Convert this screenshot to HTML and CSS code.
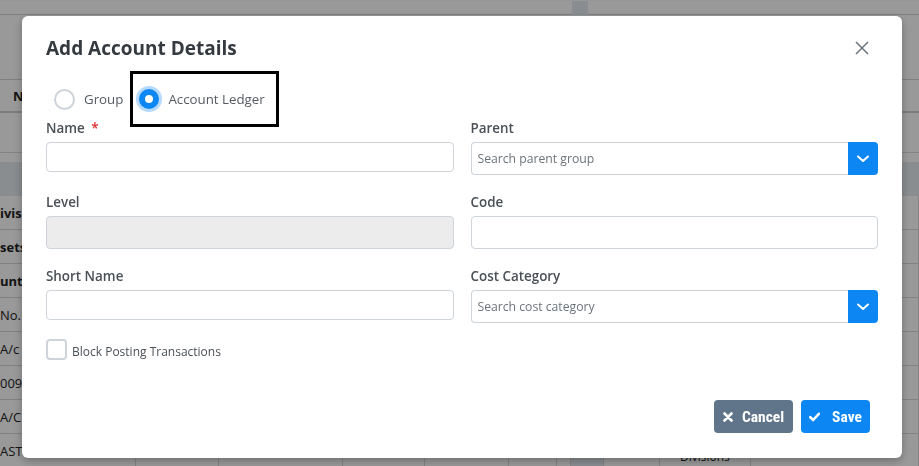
FILE: index.html
```html
<!DOCTYPE html>
<html lang="en">
<head>
<meta charset="utf-8">
<title>Add Account Details</title>
<link rel="stylesheet" href="styles.css">
</head>
<body>
<div class="bg-page">
  <div class="bg-top"><span class="bg-top-tab"></span></div>
  <div class="bg-head"><span class="bg-head-cell">N</span></div>
  <div class="bg-filter"></div>
  <div class="bg-band"></div>
  <div class="bg-row bold"><span>ivis</span><span></span><span></span><span></span><span></span><span></span><span></span><span class="bg-tint"></span><span></span><span></span><span></span></div>
  <div class="bg-row bold"><span>sets</span><span></span><span></span><span></span><span></span><span></span><span></span><span class="bg-tint"></span><span></span><span></span><span></span></div>
  <div class="bg-row bold"><span>unts</span><span></span><span></span><span></span><span></span><span></span><span></span><span class="bg-tint"></span><span></span><span></span><span></span></div>
  <div class="bg-row"><span>No.1</span><span></span><span></span><span></span><span></span><span></span><span></span><span class="bg-tint"></span><span></span><span></span><span></span></div>
  <div class="bg-row"><span>A/c N</span><span></span><span></span><span></span><span></span><span></span><span></span><span class="bg-tint"></span><span></span><span></span><span></span></div>
  <div class="bg-row"><span>0092</span><span></span><span></span><span></span><span></span><span></span><span></span><span class="bg-tint"></span><span></span><span></span><span></span></div>
  <div class="bg-row"><span>A/C</span><span></span><span></span><span></span><span></span><span></span><span></span><span class="bg-tint"></span><span></span><span></span><span></span></div>
  <div class="bg-row"><span>AST</span><span></span><span></span><span></span><span></span><span></span><span></span><span class="bg-tint"></span><span></span><span class="bg-low">Divisions</span><span></span></div>
</div>

<div class="overlay">
  <div class="modal">
    <div class="modal-header">
      <h2 class="modal-title">Add Account Details</h2>
      <button class="close-btn" type="button" aria-label="Close">
        <svg width="14" height="14" viewBox="0 0 14 14"><path d="M1 1 L13 13 M13 1 L1 13" stroke="#6b737b" stroke-width="1.5" fill="none"/></svg>
      </button>
    </div>

    <div class="radio-row">
      <label class="radio-item"><span class="radio"></span><span class="radio-text">Group</span></label>
      <label class="radio-item"><span class="radio checked"></span><span class="radio-text">Account Ledger</span></label>
    </div>
    <div class="annot-box"></div>

    <div class="form-grid">
      <div class="field">
        <div class="label">Name <span class="req">*</span></div>
        <div class="input"></div>
      </div>
      <div class="field">
        <div class="label">Parent</div>
        <div class="select">
          <div class="select-input">Search parent group</div>
          <div class="select-btn"><svg width="12" height="8" viewBox="0 0 12 8"><path d="M1 1.5 L6 6 L11 1.5" stroke="#fff" stroke-width="2" fill="none" stroke-linecap="round" stroke-linejoin="round"/></svg></div>
        </div>
      </div>
      <div class="field">
        <div class="label">Level</div>
        <div class="input tall disabled"></div>
      </div>
      <div class="field">
        <div class="label">Code</div>
        <div class="input tall"></div>
      </div>
      <div class="field">
        <div class="label">Short Name</div>
        <div class="input"></div>
      </div>
      <div class="field">
        <div class="label">Cost Category</div>
        <div class="select">
          <div class="select-input">Search cost category</div>
          <div class="select-btn"><svg width="12" height="8" viewBox="0 0 12 8"><path d="M1 1.5 L6 6 L11 1.5" stroke="#fff" stroke-width="2" fill="none" stroke-linecap="round" stroke-linejoin="round"/></svg></div>
        </div>
      </div>
    </div>

    <label class="check-row"><span class="checkbox"></span><span class="check-text">Block Posting Transactions</span></label>

    <div class="modal-footer">
      <button class="btn btn-cancel" type="button">
        <svg width="10" height="10" viewBox="0 0 10 10"><path d="M1.5 1.5 L8.5 8.5 M8.5 1.5 L1.5 8.5" stroke="#fff" stroke-width="2.6" stroke-linecap="round" fill="none"/></svg>
        <span>Cancel</span>
      </button>
      <button class="btn btn-save" type="button">
        <svg width="11" height="10" viewBox="0 0 11 10"><path d="M1.3 5.2 L4.2 8 L9.8 1.8" stroke="#fff" stroke-width="2.6" stroke-linecap="round" stroke-linejoin="round" fill="none"/></svg>
        <span>Save</span>
      </button>
    </div>
  </div>
</div>
</body>
</html>
```

FILE: styles.css
```css
* { box-sizing: border-box; }

html, body {
  margin: 0;
  padding: 0;
  width: 919px;
  height: 466px;
  overflow: hidden;
  font-family: "Open Sans", "Noto Sans", sans-serif;
  background: #fff;
}

/* ---------- background page (behind the backdrop) ---------- */
.bg-page {
  width: 919px;
  height: 466px;
  overflow: hidden;
  color: #222;
  font-size: 13px;
}
.bg-top {
  height: 15px;
  border-top: 1px solid #fafafa;
  border-bottom: 1px solid #d6d6d6;
  display: flex;
  padding-left: 572px;
}
.bg-top-tab {
  width: 16px;
  height: 14px;
  background: #e4ecf3;
}
.bg-head {
  margin-top: 64px;
  height: 34px;
  border-top: 1px solid #d4d4d4;
  border-bottom: 2px solid #cfcfcf;
  display: flex;
  align-items: center;
}
.bg-head-cell {
  padding-left: 13px;
  font-weight: 700;
}
.bg-filter {
  height: 40px;
  border-bottom: 1px solid #dcdcdc;
}
.bg-band {
  margin-top: 9px;
  height: 34px;
  background: #e6ebf0;
}
.bg-row {
  display: grid;
  grid-template-columns: 136px 83px 124px 82px 84px 48px 14px 33px 56px 91px 1fr;
  height: 34px;
  border-bottom: 1px solid #d8d8d8;
}
.bg-row span {
  border-right: 1px solid #dadada;
  display: flex;
  align-items: center;
  white-space: nowrap;
  overflow: hidden;
}
.bg-row.bold span { font-weight: 700; }
.bg-tint { background: #e6ecf3; }
.bg-low {
  padding-top: 12px;
  padding-left: 20px;
  font-size: 12px;
  line-height: 16px;
}

/* ---------- backdrop & modal ---------- */
.overlay {
  position: fixed;
  inset: 0;
  background: rgba(0, 0, 0, 0.4);
}
.modal {
  position: relative;
  width: 880px;
  height: 442px;
  margin: 16px 0 0 22px;
  background: #fff;
  border-radius: 6px;
  box-shadow: 0 3px 8px rgba(0, 0, 0, 0.28);
  display: flex;
  flex-direction: column;
}
.modal-header {
  height: 44px;
  padding: 20px 33px 0 24px;
  display: flex;
  align-items: center;
  justify-content: space-between;
}
.modal-title {
  margin: 0;
  font-size: 19px;
  line-height: 24px;
  font-weight: 700;
  color: #343a40;
}
.close-btn {
  border: 0;
  background: none;
  padding: 0;
  width: 14px;
  height: 14px;
  display: flex;
}

.radio-row {
  margin-top: 24px;
  height: 30px;
  padding-left: 32px;
  display: flex;
  align-items: center;
  gap: 16px;
}
.radio-item {
  display: flex;
  align-items: center;
  gap: 9px;
}
.radio {
  width: 21px;
  height: 21px;
  border-radius: 50%;
  border: 2px solid #ced4da;
  background: #fff;
}
.radio.checked {
  width: 20px;
  height: 20px;
  border: 6px solid #0b86f3;
  box-shadow: 0 0 0 3px #b6dafd;
}
.radio-text {
  font-size: 13.3px;
  color: #555b61;
}
.annot-box {
  position: absolute;
  left: 108px;
  top: 55px;
  width: 149px;
  height: 56px;
  border: 3px solid #000;
}

.form-grid {
  margin-top: 5px;
  padding: 0 24px;
  display: grid;
  grid-template-columns: 1fr 1fr;
  column-gap: 17px;
  row-gap: 18px;
  align-items: start;
}
.label {
  font-size: 13.4px;
  line-height: 18px;
  font-weight: 600;
  color: #4a5056;
  margin-bottom: 5px;
}
.req {
  color: #e02b2b;
  margin-left: 3px;
}
.input {
  height: 30px;
  border: 1px solid #ced4da;
  border-radius: 4px;
  background: #fff;
}
.input.tall { height: 33px; }
.input.disabled { background: #ececec; }

.select {
  display: flex;
  height: 33px;
}
.select-input {
  flex: 1;
  border: 1px solid #ced4da;
  border-right: 0;
  border-radius: 4px 0 0 4px;
  padding-left: 6px;
  display: flex;
  align-items: center;
  font-size: 12.2px;
  color: #6c737a;
}
.select-btn {
  width: 30px;
  background: #0b86f3;
  border-radius: 0 4px 4px 0;
  display: flex;
  align-items: center;
  justify-content: center;
}

.check-row {
  margin-top: 15px;
  padding-left: 24px;
  display: flex;
  align-items: center;
  gap: 5px;
}
.checkbox {
  width: 21px;
  height: 21px;
  border: 2px solid #ced4da;
  border-radius: 4px;
}
.check-text {
  font-size: 12px;
  color: #4a5056;
  margin-top: 5px;
}

.modal-footer {
  margin-top: auto;
  padding: 0 32px 25px;
  display: flex;
  justify-content: flex-end;
  gap: 8px;
}
.btn {
  height: 33px;
  border: 0;
  border-radius: 4px;
  color: #fff;
  display: flex;
  align-items: center;
  justify-content: center;
  font-family: "Liberation Sans Narrow", "Roboto Condensed", "Liberation Sans", sans-serif;
  font-weight: 700;
  font-size: 15.5px;
  padding: 0;
}
.btn-cancel {
  width: 79px;
  background: #60748a;
  gap: 9px;
}
.btn-save {
  width: 69px;
  background: #0b86f3;
  gap: 12px;
}
```
